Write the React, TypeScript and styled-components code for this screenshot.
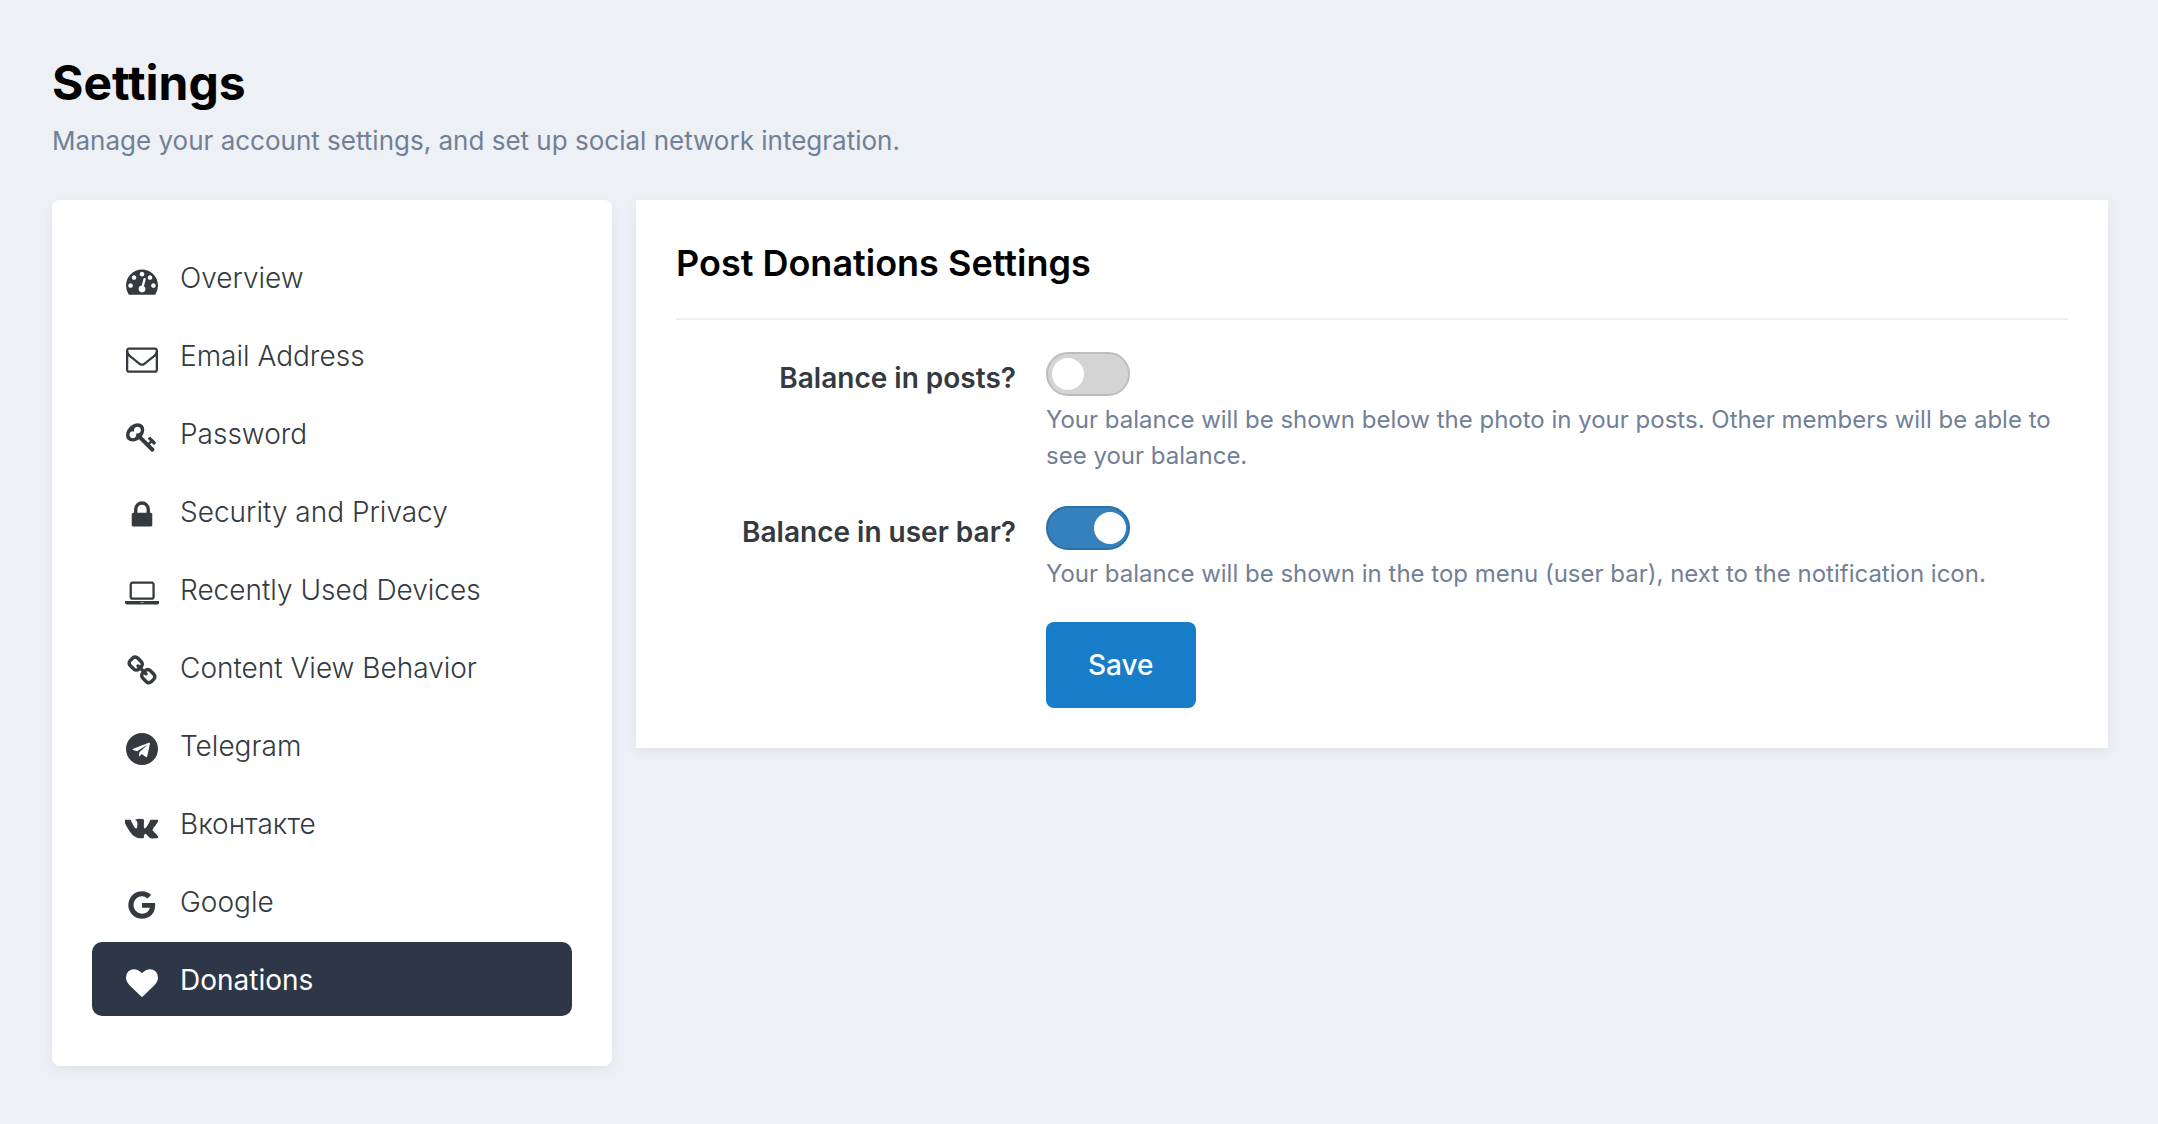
import React, { useState } from "react";
import styled, { createGlobalStyle } from "styled-components";

const GlobalStyle = createGlobalStyle`
  *, *::before, *::after { box-sizing: border-box; }
  body {
    margin: 0;
    background: #edf0f5;
    color: #343a40;
    font-family: Inter, "Liberation Sans", sans-serif;
    font-size: 28px;
  }
`;

const Page = styled.main`
  padding: 52px 50px 58px 52px;
`;

const PageHeader = styled.header`
  margin-bottom: 40px;
`;

const PageTitle = styled.h1`
  margin: 0;
  color: #000;
  font-size: 48px;
  font-weight: 700;
  line-height: 62px;
`;

const PageSubtitle = styled.p`
  margin: 8px 0 0;
  color: #718096;
  font-size: 26px;
  font-weight: 400;
  line-height: 38px;
`;

const Columns = styled.div`
  display: grid;
  grid-template-columns: 560px minmax(0, 1fr);
  align-items: start;
  gap: 24px;
`;

const Card = styled.section<{ $rounded?: boolean }>`
  padding: 40px;
  background: #fff;
  border-radius: ${({ $rounded }) => ($rounded ? "8px" : "0")};
  box-shadow: 0 4px 12px rgba(0, 0, 0, 0.06);
`;

const Menu = styled.ul`
  display: flex;
  flex-direction: column;
  gap: 4px;
  margin: 0;
  padding: 0 0 10px;
  list-style: none;
`;

const MenuLink = styled.a<{ $active: boolean }>`
  display: flex;
  align-items: center;
  gap: 20px;
  height: 74px;
  padding: 2px 32px 0;
  border-radius: 10px;
  background: ${({ $active }) => ($active ? "#2d3748" : "transparent")};
  color: ${({ $active }) => ($active ? "#fff" : "#343a40")};
  font-weight: ${({ $active }) => ($active ? 400 : 300)};
  line-height: 42px;
  text-decoration: none;
`;

const IconSlot = styled.span`
  display: flex;
  flex: 0 0 36px;
  justify-content: center;
  padding-top: 6px;

  svg {
    display: block;
    height: 32px;
    fill: currentColor;
  }
`;

const CardTitle = styled.h2`
  margin: 0 0 32px;
  padding-bottom: 32px;
  border-bottom: 2px solid #f0f0f0;
  color: #000;
  font-size: 36px;
  font-weight: 600;
  line-height: 46px;
`;

const Form = styled.form`
  display: flex;
  flex-direction: column;
  gap: 30px;
`;

const Fields = styled.div`
  display: flex;
  flex-direction: column;
  gap: 32px;
`;

const FormRow = styled.div`
  display: grid;
  grid-template-columns: 340px minmax(0, 1fr);
  column-gap: 30px;
`;

const FieldLabel = styled.label`
  padding-top: 5px;
  font-weight: 600;
  line-height: 42px;
  text-align: right;
`;

const FieldBody = styled.div`
  grid-column: 2;
`;

const Switch = styled.input`
  display: flex;
  align-items: center;
  width: 84px;
  height: 44px;
  margin: 0;
  padding: 0 4px;
  appearance: none;
  border: 2px solid #bdbdbd;
  border-radius: 22px;
  background: #d4d4d4;
  cursor: pointer;

  &::before {
    content: "";
    width: 32px;
    height: 32px;
    border-radius: 50%;
    background: #fff;
  }

  &:checked {
    justify-content: flex-end;
    padding-right: 2px;
    border-color: #2a6fa8;
    background: #3680bb;
  }
`;

const Help = styled.p`
  margin: 6px 0 0;
  color: #718096;
  font-size: 24px;
  font-weight: 400;
  line-height: 36px;
`;

const SaveButton = styled.button`
  height: 86px;
  padding: 0 42px;
  border: 0;
  border-radius: 8px;
  background: #187dc9;
  color: #fff;
  font: inherit;
  font-weight: 500;
  cursor: pointer;
`;

type MenuItem = { label: string; width?: number; path: string };

const items: MenuItem[] = [
  {
    label: "Overview",
    path: "M384 1152q0-53-37.5-90.5t-90.5-37.5-90.5 37.5-37.5 90.5 37.5 90.5 90.5 37.5 90.5-37.5 37.5-90.5zm192-448q0-53-37.5-90.5t-90.5-37.5-90.5 37.5-37.5 90.5 37.5 90.5 90.5 37.5 90.5-37.5 37.5-90.5zm428 481l101-382q6-26-7.5-48.5t-38.5-29.5-48 6.5-30 39.5l-101 382q-60 5-107 43.5t-63 98.5q-20 77 20 146t117 89 146-20 89-117q16-60-6-117t-72-91zm660-33q0-53-37.5-90.5t-90.5-37.5-90.5 37.5-37.5 90.5 37.5 90.5 90.5 37.5 90.5-37.5 37.5-90.5zm-640-640q0-53-37.5-90.5t-90.5-37.5-90.5 37.5-37.5 90.5 37.5 90.5 90.5 37.5 90.5-37.5 37.5-90.5zm448 192q0-53-37.5-90.5t-90.5-37.5-90.5 37.5-37.5 90.5 37.5 90.5 90.5 37.5 90.5-37.5 37.5-90.5zm320 448q0 261-141 483-19 29-54 29h-1402q-35 0-54-29-141-221-141-483 0-182 71-348t191-286 286-191 348-71 348 71 286 191 191 286 71 348z",
  },
  {
    label: "Email Address",
    path: "M1664 1504v-768q-32 36-69 66-268 206-426 338-51 43-83 67t-86.5 48.5-102.5 24.5h-2q-48 0-102.5-24.5t-86.5-48.5-83-67q-158-132-426-338-37-30-69-66v768q0 13 9.5 22.5t22.5 9.5h1472q13 0 22.5-9.5t9.5-22.5zm0-1051v-24.5l-.5-13-3-12.5-5.5-9-9-7.5-14-2.5h-1472q-13 0-22.5 9.5t-9.5 22.5q0 168 147 284 193 152 401 317 6 5 35 29.5t46 37.5 44.5 31.5 50.5 27.5 43 9h2q20 0 43-9t50.5-27.5 44.5-31.5 46-37.5 35-29.5q208-165 401-317 54-43 100.5-115.5t46.5-131.5zm128-37v1088q0 66-47 113t-113 47h-1472q-66 0-113-47t-47-113v-1088q0-66 47-113t113-47h1472q66 0 113 47t47 113z",
  },
  {
    label: "Password",
    path: "M832 512q0-80-56-136t-136-56-136 56-56 136q0 42 19 83-41-19-83-19-80 0-136 56t-56 136 56 136 136 56 136-56 56-136q0-42-19-83 41 19 83 19 80 0 136-56t56-136zm851 704q0 17-49 66t-66 49q-9 0-28.5-16t-36.5-33-38.5-40-24.5-26l-96 96 220 220q28 28 28 68 0 42-39 81t-81 39q-40 0-68-28l-671-671q-176 131-365 131-163 0-265.5-102.5t-102.5-265.5q0-160 95-313t248-248 313-95q163 0 265.5 102.5t102.5 265.5q0 189-131 365l355 355 96-96q-3-3-26-24.5t-40-38.5-33-36.5-16-28.5q0-17 49-66t66-49q13 0 23 10 6 6 46 44.5t82 79.5 86.5 86 73 78 28.5 41z",
  },
  {
    label: "Security and Privacy",
    path: "M640 768h512v-192q0-106-75-181t-181-75-181 75-75 181v192zm832 96v576q0 40-28 68t-68 28h-960q-40 0-68-28t-28-68v-576q0-40 28-68t68-28h32v-192q0-184 132-316t316-132 316 132 132 316v192h32q40 0 68 28t28 68z",
  },
  {
    label: "Recently Used Devices",
    width: 1920,
    path: "M416 1280q-66 0-113-47t-47-113v-704q0-66 47-113t113-47h1088q66 0 113 47t47 113v704q0 66-47 113t-113 47h-1088zm-32-864v704q0 13 9.5 22.5t22.5 9.5h1088q13 0 22.5-9.5t9.5-22.5v-704q0-13-9.5-22.5t-22.5-9.5h-1088q-13 0-22.5 9.5t-9.5 22.5zm1376 928h160v96q0 40-47 68t-113 28h-1600q-66 0-113-28t-47-68v-96h1760zm-720 96q16 0 16-16t-16-16h-160q-16 0-16 16t16 16h160z",
  },
  {
    label: "Content View Behavior",
    path: "M1520 1216q0-40-28-68l-208-208q-28-28-68-28-42 0-72 32 3 3 19 18.5t21.5 21.5 15 19 13 25.5 3.5 27.5q0 40-28 68t-68 28q-15 0-27.5-3.5t-25.5-13-19-15-21.5-21.5-18.5-19q-33 31-33 73 0 40 28 68l206 207q27 27 68 27 40 0 68-26l147-146q28-28 28-67zm-703-705q0-40-28-68l-206-207q-28-28-68-28-39 0-68 27l-147 146q-28 28-28 67 0 40 28 68l208 208q27 27 68 27 42 0 72-31-3-3-19-18.5t-21.5-21.5-15-19-13-25.5-3.5-27.5q0-40 28-68t68-28q15 0 27.5 3.5t25.5 13 19 15 21.5 21.5 18.5 19q33-31 33-73zm895 705q0 120-85 203l-147 146q-83 83-203 83-121 0-204-85l-206-207q-83-83-83-203 0-123 88-209l-88-88q-86 88-208 88-120 0-204-84l-208-208q-84-84-84-204t85-203l147-146q83-83 203-83 121 0 204 85l206 207q83 83 83 203 0 123-88 209l88 88q86-88 208-88 120 0 204 84l208 208q84 84 84 204z",
  },
  {
    label: "Telegram",
    path: "M1189 1307l147-693q9-44-10.5-63t-51.5-7l-864 333q-29 11-39.5 25t-2.5 26.5 32 19.5l221 69 513-323q21-14 32-6 7 5-4 15l-415 375-16 228q23 0 45-22l108-104 224 165q64 36 81-38zm603-411q0 182-71 348t-191 286-286 191-348 71-348-71-286-191-191-286-71-348 71-348 191-286 286-191 348-71 348 71 286 191 191 286 71 348z",
  },
  {
    label: "Вконтакте",
    width: 1920,
    path: "M1853 520q23 64-150 294-24 32-65 85-78 100-90 131-17 41 14 81 17 21 81 82h1l1 1 1 1 2 2q141 131 191 221 3 5 6.5 12.5t7 26.5-.5 34-25 27.5-59 12.5l-256 4q-24 5-56-5t-52-22l-20-12q-30-21-70-64t-68.5-77.5-61-58-56.5-15.5q-3 1-8 3.5t-17 14.5-21.5 29.5-17 52-6.5 77.5q0 15-3.5 27.5t-7.5 18.5l-4 5q-18 19-53 22h-115q-71 4-146-16.5t-131.5-53-103-66-70.5-57.5l-25-24q-10-10-27.5-30t-71.5-91-106-151-122.5-211-130.5-272q-6-16-6-27t3-16l4-6q15-19 57-19l274-2q12 2 23 6.5t16 8.5l5 3q16 11 24 32 20 50 46 103.5t41 81.5l16 29q29 60 56 104t48.5 68.5 41.5 38.5 34 14 27-5q2-1 5-5t12-22 13.5-47 9.5-81 0-125q-2-40-9-73t-14-46l-6-12q-25-34-85-43-13-2 5-24 16-19 38-30 53-26 239-24 82 1 135 13 20 5 33.5 13.5t20.5 24 10.5 32 3.5 45.5-1 55-2.5 70.5-1.5 82.5q0 11-1 42t-.5 48 3.5 40.5 11.5 39 22.5 24.5q8 2 17 4t26-11 38-34.5 52-67 68-107.5q60-104 107-225 4-10 10-17.5t11-10.5l4-3 5-2.5 13-3 20-.5 288-2q39-5 64 2.5t31 16.5z",
  },
  {
    label: "Google",
    path: "M896 786h725q12 67 12 128 0 217-91 387.5t-259.5 266.5-386.5 96q-157 0-299-60.5t-245-163.5-163.5-245-60.5-299 60.5-299 163.5-245 245-163.5 299-60.5q300 0 515 201l-209 201q-123-119-306-119-129 0-238.5 65t-173.5 176.5-64 243.5 64 243.5 173.5 176.5 238.5 65q87 0 160-24t120-60 82-82 51.5-87 22.5-78h-436v-264z",
  },
  {
    label: "Donations",
    path: "M896 1664q-26 0-44-18l-624-602q-10-8-27.5-26t-55.5-65.5-68-97.5-53.5-121-23.5-138q0-220 127-344t351-124q62 0 126.5 21.5t120 58 95.5 68.5 76 68q36-36 76-68t95.5-68.5 120-58 126.5-21.5q224 0 351 124t127 344q0 221-229 450l-623 600q-18 18-44 18z",
  },
];

type SwitchFieldProps = {
  id: string;
  label: string;
  help: string;
  initial: boolean;
};

function SwitchField({ id, label, help, initial }: SwitchFieldProps) {
  const [checked, setChecked] = useState(initial);
  return (
    <FormRow>
      <FieldLabel htmlFor={id}>{label}</FieldLabel>
      <FieldBody>
        <Switch
          id={id}
          type="checkbox"
          role="switch"
          checked={checked}
          onChange={(event) => setChecked(event.target.checked)}
        />
        <Help>{help}</Help>
      </FieldBody>
    </FormRow>
  );
}

export default function App() {
  return (
    <>
      <GlobalStyle />
      <Page>
        <PageHeader>
          <PageTitle>Settings</PageTitle>
          <PageSubtitle>
            Manage your account settings, and set up social network integration.
          </PageSubtitle>
        </PageHeader>
        <Columns>
          <Card as="nav" $rounded>
            <Menu>
              {items.map(({ label, width = 1792, path }) => (
                <li key={label}>
                  <MenuLink href="#" $active={label === "Donations"}>
                    <IconSlot>
                      <svg viewBox={`0 0 ${width} 1792`} aria-hidden="true">
                        <path d={path} />
                      </svg>
                    </IconSlot>
                    {label}
                  </MenuLink>
                </li>
              ))}
            </Menu>
          </Card>
          <Card>
            <CardTitle>Post Donations Settings</CardTitle>
            <Form onSubmit={(event) => event.preventDefault()}>
              <Fields>
                <SwitchField
                  id="balance-posts"
                  label="Balance in posts?"
                  help="Your balance will be shown below the photo in your posts. Other members will be able to see your balance."
                  initial={false}
                />
                <SwitchField
                  id="balance-bar"
                  label="Balance in user bar?"
                  help="Your balance will be shown in the top menu (user bar), next to the notification icon."
                  initial={true}
                />
              </Fields>
              <FormRow>
                <FieldBody>
                  <SaveButton type="submit">Save</SaveButton>
                </FieldBody>
              </FormRow>
            </Form>
          </Card>
        </Columns>
      </Page>
    </>
  );
}
